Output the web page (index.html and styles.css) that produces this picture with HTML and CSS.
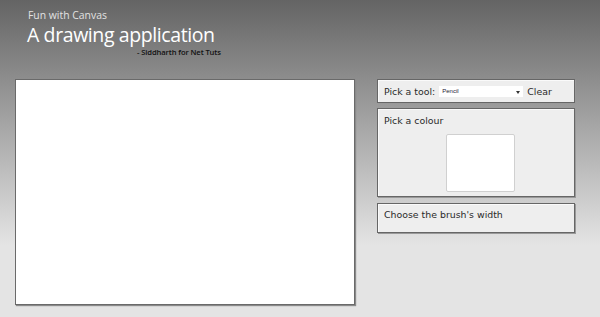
FILE: index.html
```html
<!doctype html>
<html lang="en">
<head>
  <meta charset="utf-8">
  <title>Fun with Canvas</title>
  <link rel="stylesheet" href="styles.css">
</head>
<body>

  <div class="header">
    <p class="kicker">Fun with Canvas</p>
    <h1>A drawing application</h1>
    <p class="byline">- Siddharth for Net Tuts</p>
  </div>

  <div class="main">
    <canvas id="drawing" width="340" height="225"></canvas>

    <div class="sidebar">
      <div class="panel tools">
        <label for="tool">Pick a tool:</label>
        <span class="select-wrap">
          <select id="tool">
            <option>Pencil</option>
            <option>Rectangle</option>
            <option>Line</option>
          </select>
        </span>
        <span class="clear">Clear</span>
      </div>

      <div class="panel colours">
        <p>Pick a colour</p>
        <div class="swatch"></div>
      </div>

      <div class="panel width">
        <p>Choose the brush's width</p>
      </div>
    </div>
  </div>

</body>
</html>
```

FILE: styles.css
```css
html{ background:#e4e4e4; }
body{
  margin:0; min-height:317px;
  font-family:"DejaVu Sans",Verdana,sans-serif;
  background:linear-gradient(#646464 0, #e4e4e4 245px) no-repeat;
  background-color:#e4e4e4;
}
.header{ padding:8px 0 0 28px; height:71px; box-sizing:border-box; }
.kicker{
  margin:0; font-family:"Open Sans",sans-serif; font-size:10.4px; line-height:14px;
  color:#e2e2e2;
}
h1{
  margin:2px 0 0 -1px; font-family:"Open Sans",sans-serif; font-weight:400;
  font-size:19.5px; line-height:22px; color:#fff; letter-spacing:-.4px;
}
.byline{
  margin:1px 0 0 109px; font-family:"Open Sans",sans-serif; font-size:7.6px;
  font-weight:600; line-height:10px; color:#111; letter-spacing:-.1px;
}

.main{ display:flex; align-items:flex-start; padding:8px 0 0 15px; }
#drawing{
  width:338px; height:224px; background:#fff;
  border:1px solid #6a6a6a; box-shadow:1px 1px 1px #8a8a8a;
}
.sidebar{ margin-left:22px; width:198px; display:flex; flex-direction:column; gap:5px; }
.panel{
  background:#eee; border:1px solid #666; box-shadow:1px 1px 0 #999, inset 1px 1px 0 #fafafa;
  font-size:9.4px; color:#2a2a2a; box-sizing:border-box;
}
.panel p{ margin:0; }
.tools{ height:24px; display:flex; align-items:center; padding:0 6px; }
.select-wrap{ position:relative; margin-left:4px; }
.select-wrap::after{
  content:""; position:absolute; right:3px; top:5px;
  border:2px solid transparent; border-top:3px solid #333; border-bottom:0;
}
select{
  -webkit-appearance:none; appearance:none; width:84px; height:11px;
  border:0; background:#fff; font-family:Arial,"Liberation Sans",sans-serif;
  font-size:6px; color:#223; padding:0 3px; margin:0; display:block;
}
.clear{ margin-left:4px; }
.colours{ height:89px; padding:6px 6px 0; }
.swatch{
  width:67px; height:56px; margin:8px 0 0 62px;
  background:#fff; border:1px solid #d0d0d0; border-radius:2px;
}
.width{ height:30px; padding:5px 6px 0; margin-top:1px; }
```
